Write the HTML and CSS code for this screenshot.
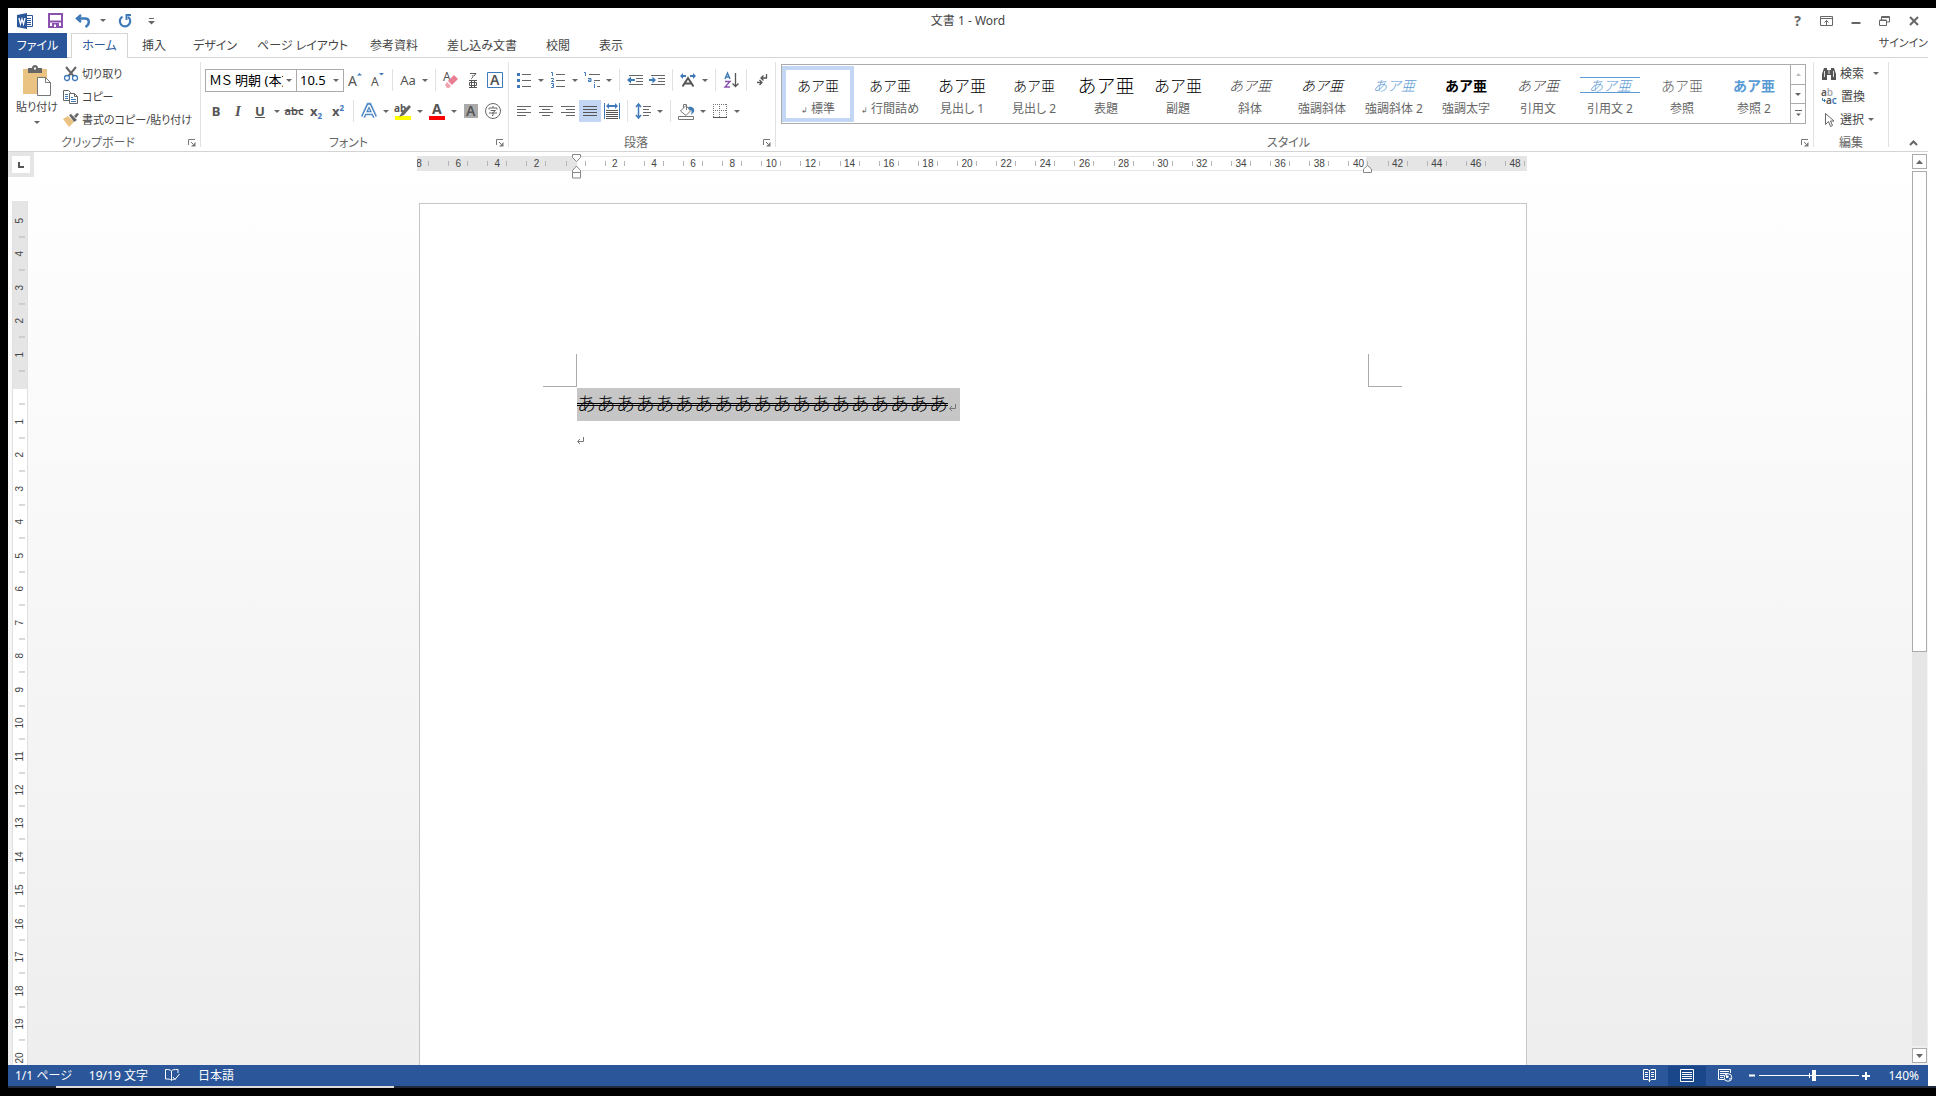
FILE: index.html
```html
<!DOCTYPE html>
<html lang="ja">
<head>
<meta charset="utf-8">
<title>文書 1 - Word</title>
<link rel="stylesheet" href="styles.css">
</head>
<body>
<svg class="sprite" aria-hidden="true">
  <symbol id="i-launch" viewBox="0 0 8 8"><path d="M.5 6V.5H7M3 3l2 2" fill="none" stroke="#777"/><path d="M7.500 3v4.500H3z" fill="#777"/></symbol>
  <symbol id="i-left" viewBox="0 0 16 16"><path d="M1 3.500h14M1 6.500h9M1 9.500h14M1 12.500h9" stroke="#666"/></symbol>
</svg>
<div class="app">
  <header class="titlebar">
    <div class="quick">
      <svg class="logo" width="17" height="16" viewBox="0 0 17 16"><path d="M9 2.500h6.500v11H9" fill="#fff" stroke="#2b579a"/><path d="M10 5.500h4M10 7.500h4M10 9.500h4M10 11.500h4" stroke="#2b579a"/><path d="M0 2l10-2v16L0 14z" fill="#2b579a"/><path d="M2 5l1.500 6L5 6l1.500 5L8 5" fill="none" stroke="#fff" stroke-width="1.300"/></svg>
      <button class="qbtn" aria-label="上書き保存"><svg width="15" height="15" viewBox="0 0 15 15"><path d="M1 1h13v13H1z" fill="#fff" stroke="#8a51ae" stroke-width="2"/><path d="M2 7.500h11v2H2zM4 10h7v5H4z" fill="#8a51ae"/><path d="M6 11.500h2V14H6z" fill="#fff"/></svg></button>
      <button class="qbtn undo" aria-label="元に戻す"><svg width="16" height="14" viewBox="0 0 16 14"><path d="M6 1L2 4.500 6 8M2.500 4.500H10c5 0 5 6 .5 8.500" fill="none" stroke="#3f7ab8" stroke-width="2.400"/></svg></button>
      <span class="dd"></span>
      <button class="qbtn" aria-label="やり直し"><svg width="14" height="14" viewBox="0 0 14 14"><path d="M4.500 2.600a5.200 5.200 0 1 0 5.500.3" fill="none" stroke="#3f7ab8" stroke-width="2.200"/><path d="M8 1h5M8.500 0v6" stroke="#3f7ab8" stroke-width="2"/></svg></button>
      <button class="qbtn" aria-label="カスタマイズ"><svg width="7" height="8" viewBox="0 0 7 8"><path d="M1 1.500h5" stroke="#666"/><path d="M0 4h7L3.500 7.500z" fill="#666"/></svg></button>
    </div>
    <h1 class="title">文書 1 - Word</h1>
    <div class="winbtns">
      <button class="help" aria-label="ヘルプ">?</button>
      <button aria-label="リボンの表示オプション"><svg width="13" height="10" viewBox="0 0 13 10"><path d="M.5.500h12v9H.500zM1 2.500h11M6.500 9V4.500M4.500 6.500l2-2 2 2" fill="none" stroke="#666"/></svg></button>
      <button aria-label="最小化"><svg width="10" height="10" viewBox="0 0 10 10"><path d="M.5 7h9" stroke="#666" stroke-width="2"/></svg></button>
      <button aria-label="元に戻す(縮小)"><svg width="11" height="10" viewBox="0 0 11 10"><path d="M.5 4.500h7v5h-7zM.5 4h7M2.500 4V.500h8v5.500H8M2.500 1.500h8" fill="none" stroke="#666"/></svg></button>
      <button aria-label="閉じる"><svg width="10" height="10" viewBox="0 0 10 10"><path d="M1 1l8 8M9 1L1 9" stroke="#666" stroke-width="2"/></svg></button>
    </div>
  </header>

  <nav class="tabs">
    <button class="tab file">ファイル</button>
    <button class="tab active">ホーム</button>
    <button class="tab">挿入</button>
    <button class="tab kana">デザイン</button>
    <button class="tab tight">ページ レイアウト</button>
    <button class="tab">参考資料</button>
    <button class="tab">差し込み文書</button>
    <button class="tab">校閲</button>
    <button class="tab">表示</button>
    <a class="signin" href="#">サインイン</a>
  </nav>

  <div class="ribbon">
    <section class="group clipboard">
      <div class="clip-body">
        <button class="paste">
          <svg width="30" height="32" viewBox="0 0 30 32"><path d="M1 4h24v25H1z" fill="#eac282"/><path d="M6 3h4c0-4 6-4 6 0h4v5H6z" fill="#666"/><path d="M12 2.500h2v2h-2z" fill="#fff"/><path d="M15.500 12.500h8l5 5v13h-13z" fill="#fff" stroke="#777"/><path d="M23.500 12.500v5h5" fill="none" stroke="#777"/></svg>
          <span>貼り付け</span><i class="arrow"></i>
        </button>
        <div class="stack">
          <button class="cmd"><svg width="16" height="16" viewBox="0 0 16 16"><path d="M3 1l7.500 9M13 1L5.500 10" stroke="#666" stroke-width="2"/><circle cx="4" cy="12" r="2.500" fill="#fff" stroke="#3f7ab8" stroke-width="1.300"/><circle cx="12" cy="12" r="2.500" fill="#fff" stroke="#3f7ab8" stroke-width="1.300"/></svg>切り取り</button>
          <button class="cmd"><svg width="16" height="16" viewBox="0 0 16 16"><path d="M.5 1.500h5l2 2v8h-7z" fill="#fff" stroke="#666"/><path d="M2 5.500h3M2 7.500h3M2 9.500h3" stroke="#3f7ab8"/><path d="M6.500 4.500h5l3 3v7h-8z" fill="#fff" stroke="#666"/><path d="M11.500 4.500v3h3" fill="none" stroke="#666"/><path d="M8 8.500h2M8 10.500h5M8 12.500h5" stroke="#3f7ab8"/></svg>コピー</button>
          <button class="cmd"><svg width="16" height="16" viewBox="0 0 16 16"><path d="M0 7l5-3 6 6-5 5z" fill="#eac282"/><path d="M6 3l2-1 6 6-3 2z" fill="#666"/><path d="M11 4l3-3 2 1-3 4z" fill="#666"/></svg>書式のコピー/貼り付け</button>
        </div>
      </div>
      <div class="glabel"><span>クリップボード</span><button class="launch" aria-label="クリップボードの詳細"><svg width="8" height="8"><use href="#i-launch"/></svg></button></div>
    </section>

    <section class="group font">
      <div class="rows">
        <div class="row">
          <span class="combo family"><select aria-label="フォント"><option>ＭＳ 明朝 (本文のフォント)</option></select></span><span class="combo size"><select aria-label="フォント サイズ"><option>10.5</option></select></span>
          <button class="ib" aria-label="フォントの拡大"><svg width="16" height="18" viewBox="0 0 16 18"><text x="1" y="15" font-size="14">A</text><path d="M10 4.500h5L12.500 2z" fill="#3f7ab8"/></svg></button>
          <button class="ib" aria-label="フォントの縮小"><svg width="16" height="18" viewBox="0 0 16 18"><text x="2" y="15" font-size="12">A</text><path d="M10 2h5l-2.500 2.500z" fill="#3f7ab8"/></svg></button>
          <span class="sep"></span>
          <button class="ib" aria-label="文字種の変換">Aa</button><span class="dd"></span>
          <span class="sep"></span>
          <button class="ib" aria-label="書式のクリア"><svg width="16" height="18" viewBox="0 0 16 18"><text x="0" y="10" font-size="12">A</text><path d="M11 4l4 4-6 6-4-4z" fill="#e87e92"/><path d="M4 11l4 4-2 2H4l-2-3z" fill="#f0a3b1"/></svg></button>
          <button class="ib" aria-label="ルビ"><svg width="16" height="18" viewBox="0 0 16 18"><path d="M5 2.500h6L9 5M8 4c0 3-1 3-2 4M4 9.500h8M4 16.500h8M6.500 9.500v7M9.500 9.500v7M4.500 11.500h7v3h-7z" fill="none" stroke="#555"/></svg></button>
          <button class="ib" aria-label="囲み線"><svg width="18" height="18" viewBox="0 0 18 18"><path d="M1.500 1.500h15v15h-15z" fill="none" stroke="#3f7ab8"/><text x="4" y="14" font-size="14" font-weight="600">A</text></svg></button>
        </div>
        <div class="row">
          <button class="ib b" aria-label="太字">B</button>
          <button class="ib i" aria-label="斜体">I</button>
          <button class="ib u" aria-label="下線">U</button><span class="dd"></span>
          <button class="ib strike" aria-label="取り消し線">abc</button>
          <button class="ib sub" aria-label="下付き">x<sub>2</sub></button>
          <button class="ib sup" aria-label="上付き">x<sup>2</sup></button>
          <span class="sep"></span>
          <button class="ib" aria-label="文字の効果"><svg width="18" height="18" viewBox="0 0 18 18"><path d="M3 15L8.500 3h1L15 15M5.500 11h7" fill="none" stroke="#a9cbee" stroke-width="5"/><path d="M3 15L8.500 3h1L15 15M5.500 11h7" fill="none" stroke="#3f7ab8" stroke-width="3.600"/><path d="M3 15L8.500 3.500h1L15 15M5.500 11h7" fill="none" stroke="#fff" stroke-width="1.600"/></svg></button><span class="dd"></span>
          <button class="ib" aria-label="蛍光ペン"><svg width="18" height="18" viewBox="0 0 18 18"><path d="M1 14h16v4H1z" fill="#ff0"/><text x="0" y="10" font-size="10" font-weight="700">ab</text><path d="M15 3l2 2-7 8-5 2 3-5z" fill="#666"/></svg></button><span class="dd"></span>
          <button class="ib" aria-label="フォントの色"><svg width="18" height="18" viewBox="0 0 18 18"><path d="M1 14h16v4H1z" fill="#f00"/><text x="4" y="12" font-size="14" font-weight="700">A</text></svg></button><span class="dd"></span>
          <button class="ib" aria-label="文字の網かけ"><svg width="16" height="16" viewBox="0 0 16 16"><path d="M1 1h14v14H1z" fill="#aaa"/><text x="3" y="13" font-size="14" font-weight="600">A</text></svg></button>
          <button class="ib" aria-label="囲い文字"><svg width="18" height="18" viewBox="0 0 18 18"><circle cx="9" cy="9" r="7.500" fill="none" stroke="#666"/><path d="M9 4v2M5 7.500V6h8v1.500M6.500 8.500h5L9 10.500M5 11h8M9 10v3.500H8" fill="none" stroke="#666"/></svg></button>
        </div>
      </div>
      <div class="glabel"><span>フォント</span><button class="launch" aria-label="フォントの詳細"><svg width="8" height="8"><use href="#i-launch"/></svg></button></div>
    </section>

    <section class="group para">
      <div class="rows">
        <div class="row">
          <button class="ib" aria-label="箇条書き"><svg width="16" height="18" viewBox="0 0 16 18"><path d="M1 2h3v3H1zM1 8h3v3H1zM1 14h3v3H1z" fill="#3f7ab8"/><path d="M6 3.500h9M6 9.500h9M6 15.500h9" stroke="#666"/></svg></button><span class="dd"></span>
          <button class="ib" aria-label="段落番号"><svg width="16" height="18" viewBox="0 0 16 18"><path d="M1 1.500h1.500V5M1 7.500h2.500v1L1.500 10.500H4M1 12.500h2.500v4H1M2 14.500h1" fill="none" stroke="#3f7ab8"/><path d="M6 3.500h9M6 9.500h9M6 15.500h9" stroke="#666"/></svg></button><span class="dd"></span>
          <button class="ib" aria-label="アウトライン"><svg width="18" height="18" viewBox="0 0 18 18"><path d="M1 1.500h1.500V5M5 7.500h3v3H5.500v-1.500H8M11.500 13v4M11.500 11v1" fill="none" stroke="#3f7ab8"/><path d="M6 3.500h11M11 9.500h6M14 15.500h3" stroke="#666"/></svg></button><span class="dd"></span>
          <span class="sep"></span>
          <button class="ib" aria-label="インデントを減らす"><svg width="16" height="16" viewBox="0 0 16 16"><path d="M2 3.500h14M9 6.500h7M9 9.500h7M2 12.500h14" stroke="#666"/><path d="M0 8l4-3.500V7h4v2H4v2.500z" fill="#3f7ab8"/></svg></button>
          <button class="ib" aria-label="インデントを増やす"><svg width="16" height="16" viewBox="0 0 16 16"><path d="M2 3.500h14M9 6.500h7M9 9.500h7M2 12.500h14" stroke="#666"/><path d="M7 8L3.500 4.500V7H0v2h3.500v2.500z" fill="#3f7ab8"/></svg></button>
          <span class="sep"></span>
          <button class="ib" aria-label="拡張書式"><svg width="16" height="16" viewBox="0 0 16 16"><path d="M2.500 14.500L8 6l5.500 8.500M5 11.500h6" fill="none" stroke="#555" stroke-width="2"/><path d="M0 4l3-3v2h3v2H3v2zM16 4l-3-3v2h-3v2h3v2z" fill="#3f7ab8"/></svg></button><span class="dd"></span>
          <span class="sep"></span>
          <button class="ib" aria-label="並べ替え"><svg width="16" height="18" viewBox="0 0 16 18"><path d="M2 8l2.500-6L7 8M3 6h3" fill="none" stroke="#3f7ab8" stroke-width="1.400"/><path d="M2 10.500h5L2 16h5" fill="none" stroke="#8a51ae" stroke-width="1.400"/><path d="M12.500 2v13M9.500 12.500l3 3 3-3" fill="none" stroke="#555" stroke-width="1.300"/></svg></button>
          <span class="sep"></span>
          <button class="ib" aria-label="編集記号"><svg width="14" height="16" viewBox="0 0 14 16"><path d="M11.500 2v4H6M8.500 3.500L6 6l2.500 2.500M2 10.500h5M4.500 8L7 10.500 4.500 13" fill="none" stroke="#555" stroke-width="1.300"/></svg></button>
        </div>
        <div class="row">
          <button class="ib" aria-label="左揃え"><svg width="16" height="16"><use href="#i-left"/></svg></button>
          <button class="ib" aria-label="中央揃え"><svg width="16" height="16" viewBox="0 0 16 16"><path d="M1 3.500h14M4 6.500h8M1 9.500h14M4 12.500h8" stroke="#666"/></svg></button>
          <button class="ib" aria-label="右揃え"><svg width="16" height="16" viewBox="0 0 16 16"><path d="M1 3.500h14M6 6.500h9M1 9.500h14M6 12.500h9" stroke="#666"/></svg></button>
          <button class="ib on" aria-label="両端揃え"><svg width="16" height="16" viewBox="0 0 16 16"><path d="M1 3.500h14M1 6.500h14M1 9.500h14M1 12.500h14" stroke="#555"/></svg></button>
          <button class="ib" aria-label="均等割り付け"><svg width="16" height="16" viewBox="0 0 16 16"><path d="M.5 0v16M15.500 0v16" stroke="#3f7ab8"/><path d="M2 3l3-3v2h6V0l3 3-3 3V4H5v2z" fill="#3f7ab8"/><path d="M2 7.500h12M2 9.500h12M2 11.500h12M2 13.500h12M2 15.500h12" stroke="#555"/></svg></button>
          <span class="sep"></span>
          <button class="ib" aria-label="行間"><svg width="16" height="16" viewBox="0 0 16 16"><path d="M3.500 2v12M1 4l2.500-3L6 4M1 12l2.500 3L6 12" fill="none" stroke="#3f7ab8" stroke-width="1.500"/><path d="M8 3.500h8M8 6.500h6M8 9.500h8M8 12.500h6" stroke="#666"/></svg></button><span class="dd"></span>
          <span class="sep"></span>
          <button class="ib" aria-label="塗りつぶし"><svg width="17" height="17" viewBox="0 0 17 17"><path d="M.5 13.500h15v3H.500zM8 2.500L2.500 8 8 12.500 12.500 8zM5.500 5V1.500h3V7" fill="none" stroke="#777"/><path d="M10 4c5-1 7 2 6 5l-3 3c1-3 1-5-1-5z" fill="#3f7ab8"/></svg></button><span class="dd"></span>
          <button class="ib" aria-label="罫線"><svg width="14" height="14" viewBox="0 0 14 14"><path d="M0 .5h14M0 6.500h14M.5 0v13M6.500 0v13M13.500 0v13" stroke="#777" stroke-dasharray="1 1"/><path d="M0 13.500h14" stroke="#555"/></svg></button><span class="dd"></span>
        </div>
      </div>
      <div class="glabel"><span>段落</span><button class="launch" aria-label="段落の詳細"><svg width="8" height="8"><use href="#i-launch"/></svg></button></div>
    </section>

    <section class="group styles">
      <div class="gallery">
        <button class="style on"><span class="pv">あア亜</span><span class="nm"><small>↲</small> 標準</span></button>
        <button class="style"><span class="pv">あア亜</span><span class="nm"><small>↲</small> 行間詰め</span></button>
        <button class="style"><span class="pv big">あア亜</span><span class="nm">見出し 1</span></button>
        <button class="style"><span class="pv">あア亜</span><span class="nm">見出し 2</span></button>
        <button class="style"><span class="pv huge">あア亜</span><span class="nm">表題</span></button>
        <button class="style"><span class="pv big">あア亜</span><span class="nm">副題</span></button>
        <button class="style"><span class="pv it soft">あア亜</span><span class="nm">斜体</span></button>
        <button class="style"><span class="pv it">あア亜</span><span class="nm">強調斜体</span></button>
        <button class="style"><span class="pv it blue">あア亜</span><span class="nm">強調斜体 2</span></button>
        <button class="style"><span class="pv bold">あア亜</span><span class="nm">強調太字</span></button>
        <button class="style"><span class="pv it soft">あア亜</span><span class="nm">引用文</span></button>
        <button class="style"><span class="pv it blue ruled">あア亜</span><span class="nm">引用文 2</span></button>
        <button class="style"><span class="pv gray">あア亜</span><span class="nm">参照</span></button>
        <button class="style"><span class="pv bold blue">あア亜</span><span class="nm">参照 2</span></button>
        <div class="gscroll">
          <button disabled aria-label="前へ"><svg width="5" height="3" viewBox="0 0 5 3"><path d="M0 3h5L2.500 0z" fill="#bbb"/></svg></button>
          <button aria-label="次へ"><i class="arrow"></i></button>
          <button aria-label="その他"><svg width="7" height="7" viewBox="0 0 7 7"><path d="M0 .5h7" stroke="#666"/><path d="M1 3.500h5L3.500 6z" fill="#666"/></svg></button>
        </div>
      </div>
      <div class="glabel"><span>スタイル</span><button class="launch" aria-label="スタイルの詳細"><svg width="8" height="8"><use href="#i-launch"/></svg></button></div>
    </section>

    <section class="group editing">
      <div class="stack">
        <button class="cmd"><svg width="16" height="16" viewBox="0 0 16 16"><path d="M3 2h3v2h4V2h3l2 6v6h-5V9H6v5H1V8z" fill="#555"/><path d="M3.500 5v6M12.500 5v6M8 4v4" stroke="#ddd"/></svg>検索<span class="dd wide"></span></button>
        <button class="cmd"><svg width="17" height="16" viewBox="0 0 17 16"><text x="0" y="7" font-size="10" font-weight="600">a<tspan class="faint">b</tspan></text><text x="5" y="15" font-size="10" font-weight="600">a<tspan class="accent">c</tspan></text><path d="M1.500 9v2.500H4M3 10l1.500 1.500L3 13" fill="none" stroke="#3f7ab8"/></svg>置換</button>
        <button class="cmd"><svg width="16" height="16" viewBox="0 0 16 16"><path d="M4.500 1.500v11l3-3 2 5 2-1-2-4.500h3.500z" fill="#fff" stroke="#666"/></svg>選択<span class="dd"></span></button>
      </div>
      <div class="glabel"><span>編集</span></div>
    </section>
    <button class="collapse" aria-label="リボンを折りたたむ"><svg width="9" height="6" viewBox="0 0 9 6"><path d="M1 5l3.500-3.500L8 5" fill="none" stroke="#666" stroke-width="2"/></svg></button>
  </div>

  <main class="work">
    <div class="left">
      <div class="corner"><button aria-label="タブの種類"><svg width="6" height="6" viewBox="0 0 6 6"><path d="M1 0v5h5" fill="none" stroke="#555" stroke-width="2"/></svg></button></div>
      <div class="vruler"><div class="vnums">
        <span>5</span><span>4</span><span>3</span><span>2</span><span>1</span><span></span><span>1</span><span>2</span><span>3</span><span>4</span><span>5</span><span>6</span><span>7</span><span>8</span><span>9</span><span>10</span><span>11</span><span>12</span><span>13</span><span>14</span><span>15</span><span>16</span><span>17</span><span>18</span><span>19</span><span>20</span>
      </div></div>
    </div>
    <div class="canvas">
      <div class="hruler">
        <div class="hclip"><div class="hnums">
          <span><b>8</b></span><span><b>6</b></span><span><b>4</b></span><span><b>2</b></span><span><b></b></span><span><b>2</b></span><span><b>4</b></span><span><b>6</b></span><span><b>8</b></span><span><b>10</b></span><span><b>12</b></span><span><b>14</b></span><span><b>16</b></span><span><b>18</b></span><span><b>20</b></span><span><b>22</b></span><span><b>24</b></span><span><b>26</b></span><span><b>28</b></span><span><b>30</b></span><span><b>32</b></span><span><b>34</b></span><span><b>36</b></span><span><b>38</b></span><span><b>40</b></span><span><b>42</b></span><span><b>44</b></span><span><b>46</b></span><span><b>48</b></span>
        </div></div>
        <svg class="indent first" width="9" height="25" viewBox="0 0 9 25"><path d="M.5.500h8v3L4.500 7.500.5 3.500zM.5 16.500L4.500 12l4 4.500v7.500h-8zM.5 18.500h8" fill="#fff" stroke="#888"/></svg>
        <svg class="indent last" width="9" height="8" viewBox="0 0 9 8"><path d="M.5 7.500V4l4-3.500 4 3.500v3.500z" fill="#fff" stroke="#888"/></svg>
      </div>
      <article class="page">
        <div class="marks"><i class="crop l"></i><i class="crop r"></i></div>
        <div class="doc">
          <p class="line"><span class="sel"><span class="chars">あああああああああああああああああああ</span><svg class="ret" width="7" height="7" viewBox="0 0 7 7"><path d="M6.500 0v4.500H1M3 2L.5 4.500 3 7" fill="none" stroke="#777"/></svg></span></p>
          <p class="line"><svg class="ret" width="7" height="7" viewBox="0 0 7 7"><path d="M6.500 0v4.500H1M3 2L.5 4.500 3 7" fill="none" stroke="#777"/></svg></p>
        </div>
      </article>
    </div>
    <div class="vscroll">
      <button aria-label="上へスクロール"><svg width="7" height="4" viewBox="0 0 7 4"><path d="M0 4h7L3.500 0z" fill="#666"/></svg></button>
      <div class="track"><div class="thumb"></div></div>
      <button aria-label="下へスクロール"><svg width="7" height="4" viewBox="0 0 7 4"><path d="M0 0h7L3.500 4z" fill="#666"/></svg></button>
    </div>
  </main>

  <footer class="status">
    <span>1/1 ページ</span>
    <span>19/19 文字</span>
    <svg width="15" height="13" viewBox="0 0 15 13"><path d="M6.500 2v9M6.500 2C5 .5 3 .5.500.500v9.500c3 0 5 0 6 1.500 1-1 2-1.500 4-1.500M6.500 2c1-1.500 3-1.500 6.500-1.500V4M8 8l2 2.500L14.500 5" fill="none" stroke="#fff"/></svg>
    <span>日本語</span>
    <div class="views">
      <button aria-label="閲覧モード"><svg width="13" height="13" viewBox="0 0 13 13"><path d="M6.500 1v12M6.500 2L5 .5H.500v10H5L6.500 12 8 10.500h4.500V.5H8zM2 3.500h3M2 5.500h3M2 7.500h3M8 3.500h3M8 5.500h3M8 7.500h3" fill="none" stroke="#fff"/></svg></button>
      <button class="on" aria-label="印刷レイアウト"><svg width="14" height="13" viewBox="0 0 14 13"><path d="M.5.500h13v12H.500zM2 3.500h10M2 5.500h10M2 7.500h10M2 9.500h10" fill="none" stroke="#fff"/></svg></button>
      <button aria-label="Web レイアウト"><svg width="15" height="13" viewBox="0 0 15 13"><path d="M6 10.500H.500V.5h12V4M2 2.500h9M2 4.500h8M2 6.500h4M2 8.500h3" fill="none" stroke="#fff"/><circle cx="10" cy="8.500" r="3.800" fill="#2b579a" stroke="#fff"/><path d="M8 6l3 1-1 2-2 0zM11 9.500l2-1-1 3z" fill="#fff"/></svg></button>
    </div>
    <button class="zb" aria-label="縮小"><svg width="6" height="9" viewBox="0 0 6 9"><path d="M0 4.500h6" stroke="#fff" stroke-width="2"/></svg></button>
    <input class="zoom" type="range" min="0" max="100" value="55" aria-label="ズーム">
    <button class="zb" aria-label="拡大"><svg width="8" height="8" viewBox="0 0 8 8"><path d="M0 4h8M4 0v8" stroke="#fff" stroke-width="2"/></svg></button>
    <span class="pct">140%</span>
  </footer>
  <div class="taskedge"><div></div></div>
</div>
</body>
</html>
```
FILE: styles.css
```css
* { box-sizing: border-box; }
html, body { height: 100%; }
body {
  margin: 0;
  padding: 8px 0 8px 8px;
  background: #000;
  color: #444;
  font-family: "Noto Sans", "Noto Sans CJK JP", sans-serif;
  font-size: 12px;
  line-height: 16px;
  font-feature-settings: "palt";
}
button {
  display: flex;
  align-items: center;
  justify-content: center;
  margin: 0;
  padding: 0;
  border: 0;
  background: none;
  color: inherit;
  font: inherit;
  font-feature-settings: inherit;
  white-space: nowrap;
}
svg { display: block; flex: none; overflow: visible; }
svg text { fill: #555; font-family: "Noto Sans", sans-serif; }
svg .faint { fill: #aaa; }
svg .accent { fill: #3f7ab8; }
.sprite { position: absolute; width: 0; height: 0; }

.app { display: flex; flex-direction: column; height: 100%; padding-right: 8px; background: #fff; }

/* Title bar */
.titlebar { display: grid; grid-template-columns: 1fr auto 1fr; align-items: center; height: 25px; }
.quick { display: flex; align-items: center; padding-left: 9px; }
.logo { margin-right: 8px; }
.qbtn { width: 26px; height: 20px; }
.qbtn.undo { width: 30px; }
.quick .dd { width: 10px; margin-right: 4px; }
.title { margin: 0; font-size: 12px; font-weight: 400; }
.winbtns { display: flex; justify-content: flex-end; }
.winbtns button { width: 29px; height: 22px; }
.help { font-size: 14px; font-weight: 700; color: #666; }

/* Tabs */
.tabs { display: flex; height: 25px; border-bottom: 1px solid #d4d4d4; }
.tab { height: 24px; padding: 2px 15px 0 14px; }
.tab.kana { padding: 2px 12px 0; }
.tab.tight { padding: 2px 8px 0; }
.tab.file { width: 59px; height: 25px; padding: 0; margin-right: 4px; background: #2b579a; color: #fff; }
.tab.active { width: 57px; height: 25px; padding: 0; border: 1px solid #d4d4d4; border-bottom: 0; background: #fff; color: #2b579a; }
.signin { margin: 2px 0 0 auto; color: #444; font-size: 11px; text-decoration: none; }

/* Ribbon */
.ribbon { display: flex; height: 94px; padding-top: 4px; border-bottom: 1px solid #d4d4d4; }
.group { display: flex; flex-direction: column; height: 85px; border-right: 1px solid #e1e1e1; }
.clipboard { width: 193px; }
.font { width: 308px; }
.para { width: 267px; }
.styles { flex: 1; }
.editing { width: 75px; }
.glabel { display: flex; align-items: center; height: 18px; margin-top: auto; margin-bottom: -5px; padding-right: 4px; color: #666; }
.editing .glabel { padding-right: 0; }
.glabel span { flex: 1; text-align: center; }
.launch { width: 8px; height: 18px; }
.clip-body { display: flex; font-size: 11px; }
.paste { flex-direction: column; justify-content: flex-start; width: 42px; margin: 3px 6px 0 8px; gap: 2px; }
.paste .arrow { margin-top: 4px; }
.stack { display: flex; flex-direction: column; }
.cmd { justify-content: flex-start; height: 23px; gap: 3px; padding-left: 7px; }
.clip-body .cmd { padding-left: 0; margin-left: -1px; }
.cmd .wide { margin-left: 5px; }
.cmd .dd { margin-right: -3px; }

.arrow, .dd::before {
  content: "";
  width: 0;
  height: 0;
  border: 3px solid transparent;
  border-top-color: #666;
  border-bottom: 0;
}
.dd { display: flex; align-items: center; justify-content: center; width: 12px; height: 22px; }
.cmd .dd { width: 8px; }
.rows { display: flex; flex-direction: column; gap: 9px; padding: 7px 0 0 4px; }
.row { display: flex; align-items: center; height: 22px; }
.ib { width: 22px; height: 22px; font-size: 13px; color: #555; }
.ib.on { background: #c3d6f3; }
.b { font-weight: 700; }
.i { font-family: "Liberation Serif", serif; font-size: 15px; font-style: italic; font-weight: 700; }
.u { font-weight: 700; text-decoration: underline; }
.strike { font-size: 11px; font-weight: 600; text-decoration: line-through; }
.sub, .sup { font-weight: 700; }
.sub sub, .sup sup { font-size: 8px; line-height: 8px; color: #3f7ab8; }
.sub sub { align-self: flex-end; margin-bottom: 2px; }
.sup sup { align-self: flex-start; margin-top: 4px; }
.sep { width: 1px; height: 22px; margin: 0 4px; background: #e1e1e1; }

.combo { position: relative; height: 23px; border: 1px solid #ababab; }
.combo::after { content: ""; position: absolute; right: 4px; top: 9px; border: 3px solid transparent; border-top-color: #666; border-bottom: 0; }
.combo select { appearance: none; width: 100%; height: 21px; padding: 0 13px 0 3px; border: 0; outline: 0; background: #fff; color: #000; font: inherit; font-size: 13px; text-overflow: clip; }
.family { width: 92px; }
.size { width: 48px; margin-left: -1px; }

/* Style gallery */
.gallery { display: flex; height: 60px; margin: 2px 7px 0 5px; border: 1px solid #ababab; }
.style { flex: 1; flex-direction: column; min-width: 0; margin: 1px 0; border: 4px solid transparent; }
.style.on { border-color: #c3d6f3; }
.pv { display: flex; align-items: center; justify-content: center; height: 30px; color: #000; font-family: "Noto Sans CJK JP", sans-serif; font-size: 14px; font-weight: 300; font-feature-settings: normal; }
.pv.big { font-size: 16px; }
.pv.huge { font-size: 19px; }
.pv.it { font-style: italic; }
.pv.bold { font-weight: 700; }
.pv.soft { color: #404040; }
.pv.gray { color: #5a5a5a; }
.pv.blue { color: #5b9bd5; }
.pv.ruled { align-self: stretch; height: 16px; margin: 7px 2px; border: solid #5b9bd5; border-width: 1px 0; }
.nm { height: 18px; line-height: 18px; color: #666; }
.nm small { font-size: 8px; }
.gscroll { display: flex; flex-direction: column; width: 15px; border-left: 1px solid #ababab; }
.gscroll button { flex: 1; }
.gscroll button + button { border-top: 1px solid #ababab; }
.collapse { width: 39px; padding-left: 10px; height: 16px; margin-top: auto; }

/* Work area */
.work { display: flex; flex: 1; min-height: 0; background: linear-gradient(#fff, #eee); }
.left { display: flex; flex-direction: column; width: 26px; }
.corner { display: flex; height: 25px; flex: none; padding: 4px; margin-bottom: 24px; background: #e5e5e5; }
.corner button { width: 18px; height: 17px; background: #fff; }
.vruler { flex: 1; min-height: 0; width: 16px; margin-left: 4px; padding-top: 3px; overflow: hidden; border: solid #e1e1e1; border-width: 0 1px; background: linear-gradient(#e5e5e5, #e5e5e5) 0 0 / 100% 188px no-repeat #fff; }
.vnums { display: flex; flex-direction: column; height: calc(100% + 9px); }
.vnums span, .hnums b { font-family: "Liberation Sans", sans-serif; font-size: 10px; font-weight: 400; color: #444; }
.vnums span { display: flex; flex: 1; align-items: center; justify-content: center; writing-mode: vertical-rl; transform: rotate(180deg); line-height: 12px; background: linear-gradient(#b5b5b5, #b5b5b5) 2px 0 / 6px 1px no-repeat; }

.canvas { flex: 1; min-width: 0; display: flex; flex-direction: column; align-items: center; overflow: hidden; }
.hruler { position: relative; flex: none; width: 1110px; height: 47px; margin: 4px 0 0 -3px; }
.hclip { height: 15px; overflow: hidden; border: solid #e5e5e5; border-width: 1px 0; background: linear-gradient(#e5e5e5, #e5e5e5) 0 0 / 160px 100% no-repeat, linear-gradient(#e5e5e5, #e5e5e5) 100% 0 / 161px 100% no-repeat #fff; }
.hnums { display: flex; height: 13px; margin: 0 -8px 0 -17px; }
.hnums span { display: flex; flex: 1; align-items: center; justify-content: center; }
.hnums span::before, .hnums span::after { content: ""; width: 1px; height: 5px; background: #b5b5b5; }
.hnums b { width: 18px; text-align: center; }
.indent { position: absolute; }
.indent.first { left: 155px; top: -2px; }
.indent.last { right: 155px; top: 9px; }

.page { flex: 1; width: 1108px; border: 1px solid #c6c6c6; border-bottom: 0; background: #fff; }
.marks { display: flex; justify-content: space-between; padding: 150px 124px 0 123px; }
.crop { width: 34px; height: 33px; border: solid #ababab; border-width: 0 0 1px; }
.crop.l { border-right-width: 1px; }
.crop.r { border-left-width: 1px; }
.doc { padding: 1px 157px 0; }
.line { display: flex; height: 33px; margin: 0; align-items: center; }
.sel { display: flex; align-items: center; width: 383px; height: 33px; gap: 1px; background: #c6c6c6; }
.chars { color: #000; font-family: "Noto Sans CJK JP", sans-serif; font-size: 19px; font-weight: 300; line-height: 28px; width: 371px; height: 32px; text-align-last: justify; font-feature-settings: normal; text-decoration: line-through double 1px; }
.ret { margin-top: 6px; }

.vscroll { display: flex; flex-direction: column; width: 16px; padding: 2px 1px 2px 0; gap: 2px; }
.vscroll button { height: 15px; border: 1px solid #ababab; background: #fff; }
.track { flex: 1; background: #e6e6e6; }
.thumb { height: 55%; border: 1px solid #ababab; background: #fff; }

/* Status bar */
.status { display: flex; align-items: center; height: 21px; padding: 0 9px 0 7px; background: #2b579a; color: #fff; font-size: 12px; }
.status > span { margin-right: 17px; }
.status > svg { margin-right: 18px; }
.views { display: flex; margin: 0 2px 0 auto; }
.views button { width: 38px; height: 20px; }
.views .on { background: #19478a; }
.zb { width: 12px; height: 16px; }
.zoom { appearance: none; width: 100px; height: 11px; margin: 0 1px; background: linear-gradient(#fff, #fff) 0 5px / 100% 1px no-repeat, linear-gradient(#fff, #fff) 50px 3px / 1px 5px no-repeat; }
.zoom::-webkit-slider-thumb { appearance: none; width: 4px; height: 11px; background: #fff; }
.status > .pct { width: 34px; margin: 0 0 0 13px; text-align: right; }
.taskedge { height: 2px; margin-right: -8px; padding-left: 48px; background: #222b3d; }
.taskedge div { width: 18%; height: 2px; background: #ddd; }
```
